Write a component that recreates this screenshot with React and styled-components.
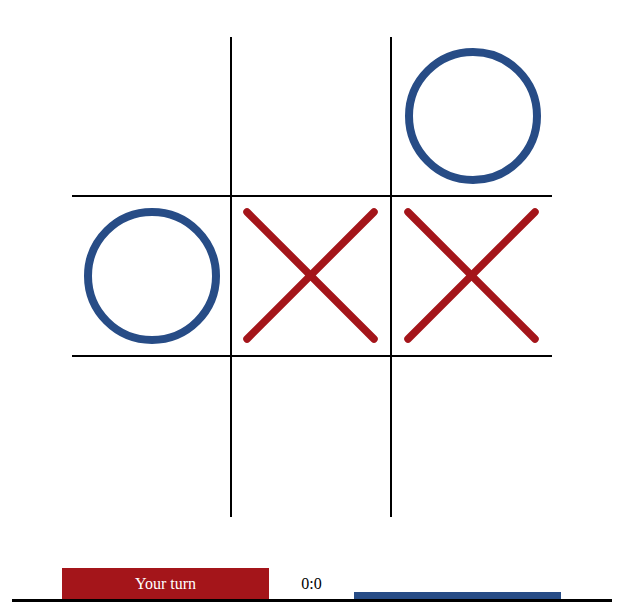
import React from 'react';
import styled, { createGlobalStyle } from 'styled-components';

const RED = '#a4151a';
const BLUE = '#274c86';

const GlobalStyle = createGlobalStyle`
  html, body {
    margin: 0;
    padding: 0;
    background: #fff;
  }
  body {
    font-family: "Liberation Serif", "Times New Roman", serif;
  }
`;

const Page = styled.div`
  width: 600px;
  margin: 0 auto;
  padding-top: 37px;
`;

const Board = styled.div`
  display: grid;
  grid-template-columns: repeat(3, 160px);
  grid-template-rows: repeat(3, 160px);
  width: 480px;
  margin: 0 auto;
`;

const Cell = styled.div`
  box-sizing: border-box;
  display: flex;
  align-items: center;
  justify-content: center;
  border-right: ${props => props.right ? '2px solid #000' : 'none'};
  border-bottom: ${props => props.bottom ? '2px solid #000' : 'none'};
`;

const StatusBar = styled.div`
  display: flex;
  align-items: flex-end;
  height: 31px;
  margin-top: 51px;
  padding: 0 51px 0 50px;
  border-bottom: 3px solid #000;
`;

const TurnBox = styled.div`
  width: 207px;
  height: 31px;
  display: flex;
  align-items: center;
  justify-content: center;
  background: ${props => props.color};
  color: #fff;
  font-size: 16px;
`;

const Score = styled.div`
  flex: 1;
  align-self: stretch;
  display: flex;
  align-items: center;
  justify-content: center;
  font-size: 16px;
  color: #000;
`;

const Tab = styled.div`
  width: 207px;
  height: 7px;
  background: ${props => props.color};
`;

const Cross = () => (
  <svg width="158" height="158" viewBox="0 0 158 158">
    <g stroke={RED} strokeWidth="7.5" strokeLinecap="round">
      <line x1="15" y1="15" x2="142" y2="142" />
      <line x1="142" y1="15" x2="15" y2="142" />
    </g>
  </svg>
);

const Nought = () => (
  <svg width="158" height="158" viewBox="0 0 158 158">
    <circle cx="80" cy="79" r="64" fill="none" stroke={BLUE} strokeWidth="8" />
  </svg>
);

const cells = [
  null, null, 'o',
  'o', 'x', 'x',
  null, null, null,
];

export default function App() {
  return (
    <>
      <GlobalStyle />
      <Page>
        <Board>
          {cells.map((mark, i) => (
            <Cell key={i} right={i % 3 < 2} bottom={i < 6}>
              {mark === 'x' ? <Cross /> : null}
              {mark === 'o' ? <Nought /> : null}
            </Cell>
          ))}
        </Board>
        <StatusBar>
          <TurnBox color={RED}>Your turn</TurnBox>
          <Score>0:0</Score>
          <Tab color={BLUE} />
        </StatusBar>
      </Page>
    </>
  );
}
